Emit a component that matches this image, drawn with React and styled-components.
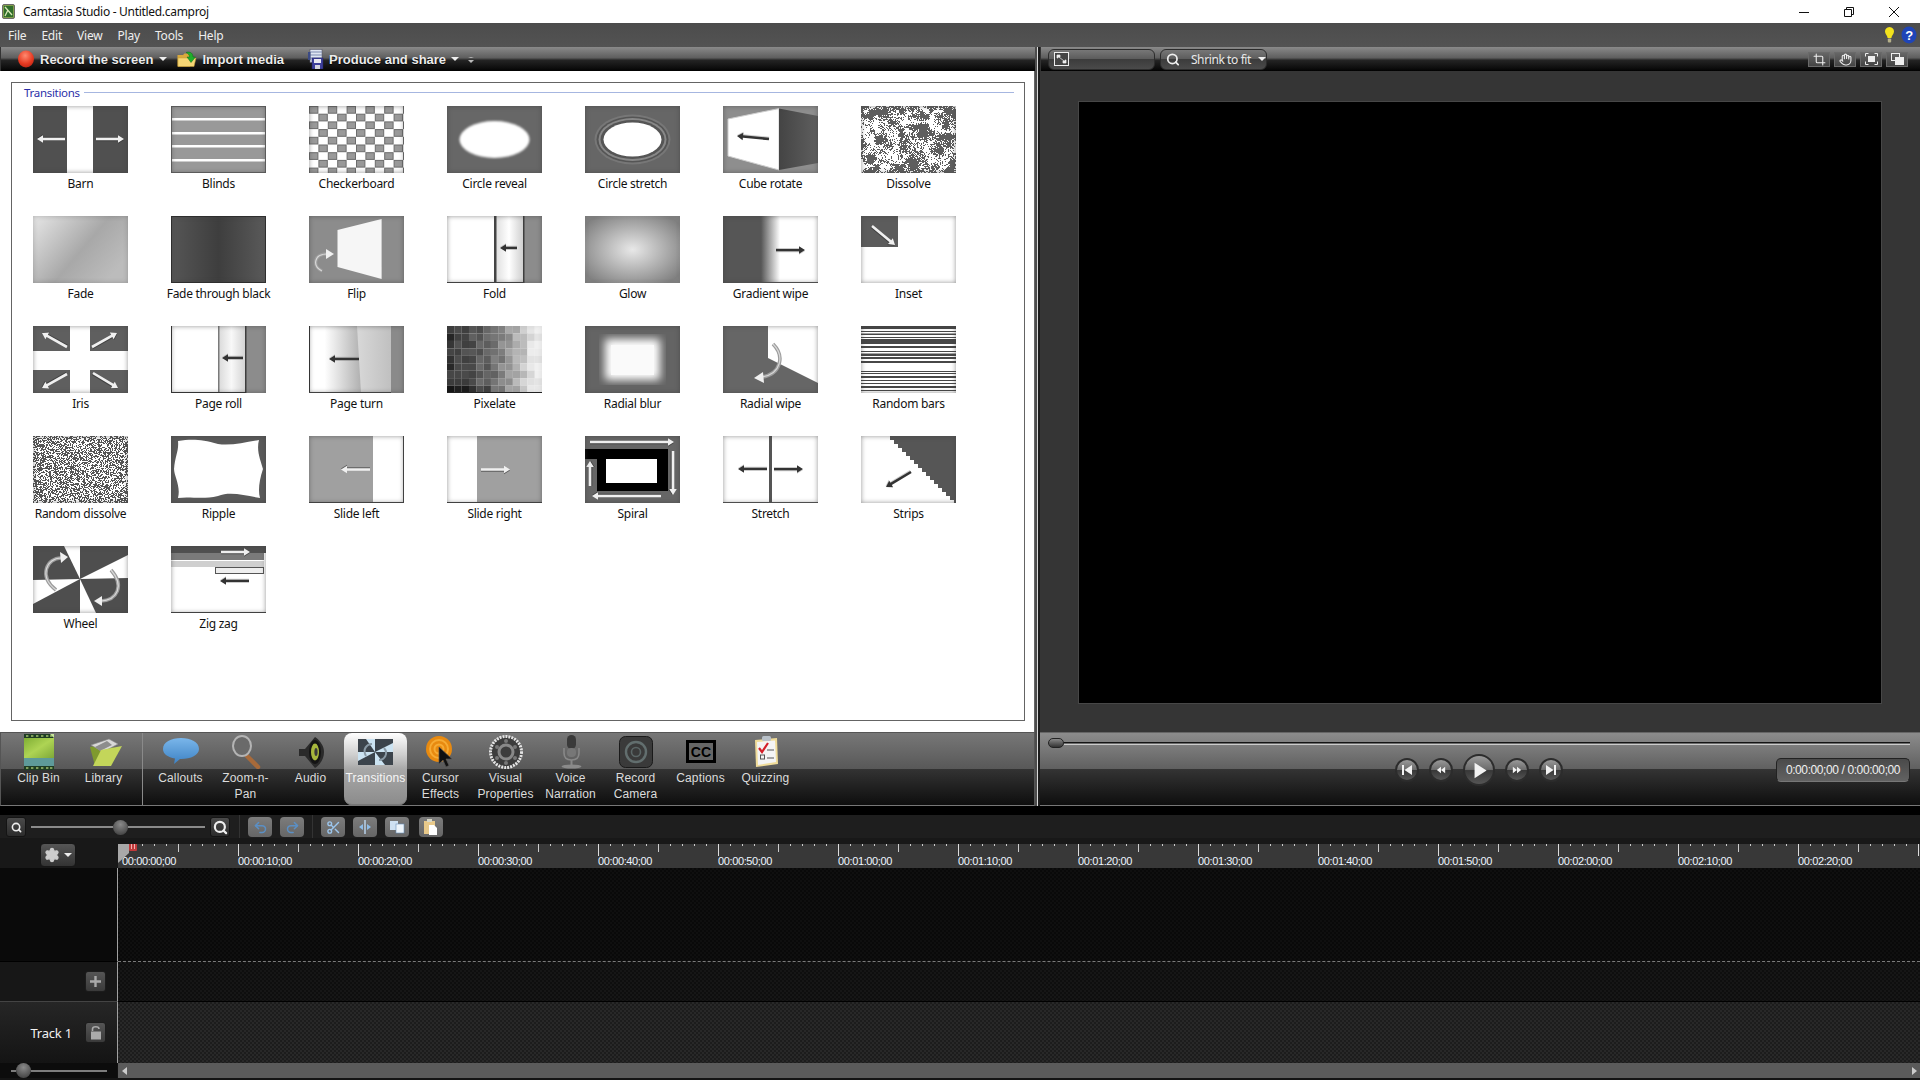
import styled, { createGlobalStyle, css } from "styled-components";
import { Crop, Hand, Redo2, Scissors, Search, Settings, Undo2 } from "lucide-react";

const GlobalStyle = createGlobalStyle`
  html, body { margin: 0; padding: 0; background: #000; }
  * { box-sizing: border-box; }
`;

const panelGradient = css`
  background: linear-gradient(#777 0%, #585858 50%, #333 50%, #0e0e0e 100%);
`;

const App_ = styled.div`
  width: 1920px;
  height: 1080px;
  overflow: hidden;
  display: flex;
  flex-direction: column;
  font-family: "Noto Sans", sans-serif;
  background: #000;
`;

const TitleBar = styled.div`
  height: 23px;
  background: #fff;
  display: flex;
  align-items: center;
  padding-left: 2px;
  font-size: 12px;
  color: #111;
`;
const TitleText = styled.span`
  margin-left: 8px;
  letter-spacing: -0.3px;
`;
const WindowButtons = styled.div`
  margin-left: auto;
  display: flex;
  gap: 35px;
  padding-right: 21px;
  align-items: center;
`;

const MenuBar = styled.div`
  height: 24px;
  background: linear-gradient(#4c4c4c, #535353);
  display: flex;
  align-items: center;
  padding-left: 8px;
  gap: 15px;
  font-size: 12px;
  letter-spacing: -0.2px;
  color: #eee;
`;
const HelpIcons = styled.div`
  margin-left: auto;
  display: flex;
  gap: 6px;
  padding-right: 3px;
  align-items: center;
`;

const Workspace = styled.div`
  height: 759px;
  display: flex;
`;
const LeftPane = styled.div`
  width: 1035px;
  display: flex;
  flex-direction: column;
`;
const Divider = styled.div`
  width: 5px;
  background: linear-gradient(90deg, #4c4c4c 0 2px, #d8d8d8 2px 3px, #1c1c1c 3px);
`;
const RightPane = styled.div`
  flex: 1;
  display: flex;
  flex-direction: column;
  background: #353535;
`;

const Toolbar = styled.div`
  height: 24px;
  flex-shrink: 0;
  display: flex;
  align-items: center;
  background: linear-gradient(#8a8a8a 0%, #5e5e5e 45%, #242424 55%, #0a0a0a 92%, #000 100%);
  border-left: 1px solid #333;
`;
const ToolItem = styled.div`
  display: flex;
  align-items: center;
  gap: ${(p) => p.$gap ?? 6}px;
  margin-left: ${(p) => p.$ml}px;
  font-family: "Liberation Sans", sans-serif;
  font-weight: 700;
  font-size: 13px;
  color: #ececec;
  text-shadow: 0 1px 1px #000;
`;
const Caret = styled.span`
  width: 0;
  height: 0;
  flex-shrink: 0;
  border-left: 4px solid transparent;
  border-right: 4px solid transparent;
  border-top: 4px solid #eee;
`;
const MoreMark = styled.span`
  margin-left: 9px;
  width: 6px;
  height: 5px;
  border-top: 1px solid #bbb;
  border-left: 3px solid transparent;
  border-right: 3px solid transparent;
  position: relative;
  &::after {
    content: "";
    position: absolute;
    top: 2px;
    left: -3px;
    border-left: 3px solid transparent;
    border-right: 3px solid transparent;
    border-top: 3px solid #bbb;
  }
`;

const BinArea = styled.div`
  flex: 1;
  background: #fff;
  padding: 11px 9px 11px 11px;
  border-right: 1px solid #666;
`;
const GroupBox = styled.div`
  height: 100%;
  border: 1px solid #646464;
  padding: 0 10px 0 21px;
`;
const GroupHeader = styled.div`
  height: 23px;
  display: flex;
  align-items: center;
  gap: 4px;
  margin-left: -9px;
  font-size: 11.5px;
  letter-spacing: -0.3px;
  color: #2b2fa8;
  padding-bottom: 5px;
  &::after {
    content: "";
    flex: 1;
    height: 1px;
    background: #a6b6e0;
  }
`;
const TransitionGrid = styled.div`
  display: grid;
  grid-template-columns: repeat(7, 95px);
  grid-auto-rows: 110px;
  column-gap: 43px;
`;
const TransitionCell = styled.div`
  display: flex;
  flex-direction: column;
  align-items: center;
`;
const Thumb = styled.div`
  width: 95px;
  height: 67px;
  position: relative;
  overflow: hidden;
  svg { display: block; }
  &::after {
    content: "";
    position: absolute;
    inset: 0;
    box-shadow: inset 0 0 5px rgba(60, 60, 60, ${(p) => p.$soft ?? 0.55});
  }
`;
const ThumbLabel = styled.div`
  margin-top: 2px;
  height: 18px;
  line-height: 18px;
  font-size: 12px;
  letter-spacing: -0.28px;
  color: #111;
  white-space: nowrap;
`;

const TabBar = styled.div`
  height: 74px;
  flex-shrink: 0;
  display: flex;
  ${panelGradient}
  border: 1px solid #555;
  border-bottom-color: #777;
  font-family: "Liberation Sans", sans-serif;
`;
const TabGroup = styled.div`
  display: flex;
  padding-left: 5px;
  width: ${(p) => p.$w};
  border-right: ${(p) => (p.$sep ? "1px solid #8a8a8a" : "0")};
`;
const Tab = styled.div`
  width: ${(p) => (p.$active ? 63 : 65)}px;
  margin: 0 ${(p) => (p.$active ? 1 : 0)}px;
  height: 72px;
  display: flex;
  flex-direction: column;
  align-items: center;
  font-size: 12px;
  line-height: 16px;
  letter-spacing: 0.15px;
  text-align: center;
  white-space: nowrap;
  color: ${(p) => (p.$active ? "#f6f6f6" : "#dcdcdc")};
  border-radius: 8px;
  ${(p) =>
    p.$active &&
    css`
      background: linear-gradient(#fff 0%, #cfcfcf 30%, #a8a8a8 50%, #8b8b8b 100%);
      box-shadow: inset 0 -1px 0 #777;
    `}
`;
const TabIcon = styled.div`
  height: 37px;
  flex-shrink: 0;
  display: flex;
  align-items: center;
  justify-content: center;
`;
const TabLabel = styled.div`
  white-space: pre-line;
`;

const PreviewBar = styled(Toolbar)`
  padding: 0 12px 0 7px;
  gap: 5px;
`;
const PreviewField = styled.div`
  width: 107px;
  height: 21px;
  flex-shrink: 0;
  display: flex;
  align-items: center;
  gap: 11px;
  padding-left: 5px;
  border-radius: 6px;
  background: linear-gradient(#777, #5a5a5a 50%, #3c3c3c 50%, #4a4a4a);
  border: 1px solid #2c2c2c;
  font-size: 12px;
  letter-spacing: -0.4px;
  white-space: nowrap;
  color: #e8e8e8;
`;
const FieldCaret = styled(Caret)`
  margin-left: -4px;
`;
const PreviewTools = styled.div`
  margin-left: auto;
  display: flex;
  gap: 4px;
`;
const PreviewTool = styled.div`
  width: 22px;
  height: 15px;
  display: flex;
  align-items: center;
  justify-content: center;
  background: linear-gradient(#666, #444);
  border: 1px solid #6a6a6a;
`;
const PreviewStage = styled.div`
  flex: 1;
  padding: 30px 38px 28px 38px;
`;
const Canvas = styled.div`
  height: 100%;
  background: #000;
  border: 1px solid #474747;
`;
const Controls = styled.div`
  height: 74px;
  flex-shrink: 0;
  background: linear-gradient(#8c8c8c 0%, #606060 50%, #343434 50%, #0e0e0e 100%);
  border-top: 1px solid #666;
  border-bottom: 1px solid #777;
  padding: 5px 10px 0 8px;
  display: flex;
  flex-direction: column;
`;
const Scrubber = styled.div`
  height: 10px;
  display: flex;
  align-items: center;
  &::after {
    content: "";
    flex: 1;
    height: 3px;
    background: linear-gradient(#141414 0 1px, #6a6a6a 1px 2px, #ccc 2px);
  }
`;
const ScrubKnob = styled.div`
  width: 16px;
  height: 10px;
  border-radius: 5px;
  background: linear-gradient(#888, #333);
  border: 1px solid #222;
`;
const ControlRow = styled.div`
  margin-top: 6px;
  height: 32px;
  display: flex;
  align-items: center;
  padding-left: 347px;
  gap: 10px;
`;
const RoundButton = styled.div`
  width: ${(p) => (p.$big ? 32 : 24)}px;
  height: ${(p) => (p.$big ? 32 : 24)}px;
  border-radius: 50%;
  display: flex;
  align-items: center;
  justify-content: center;
  background: linear-gradient(#9a9a9a, #6c6c6c 48%, #383838 52%, #555);
  border: 2px solid #2c2c2c;
`;
const TimeBox = styled.div`
  margin-left: auto;
  width: 134px;
  height: 24px;
  border-radius: 5px;
  background: linear-gradient(#4a4a4a, #626262);
  border: 1px solid #222;
  border-bottom-color: #777;
  display: flex;
  align-items: center;
  justify-content: center;
  font-family: "Liberation Sans", sans-serif;
  font-size: 12px;
  letter-spacing: -0.4px;
  color: #f0f0f0;
`;

const BlackStrip = styled.div`
  height: 9px;
  flex-shrink: 0;
  background: #000;
`;

const Timeline = styled.div`
  flex: 1;
  display: flex;
  flex-direction: column;
  background: #000;
`;
const TimelineBar = styled.div`
  height: 29px;
  flex-shrink: 0;
  background: linear-gradient(#1e1e1e 0 23px, #181818 23px);
  display: flex;
  align-items: flex-start;
  padding: 2px 0 0 6px;
`;
const DarkButton = styled.div`
  width: 20px;
  height: 20px;
  border-radius: 3px;
  background: linear-gradient(#4a4a4a, #2c2c2c);
  display: flex;
  align-items: center;
  justify-content: center;
  border: 1px solid #141414;
`;
const ZoomTrack = styled.div`
  width: 174px;
  height: 14px;
  margin: 3px 5px 0;
  display: flex;
  align-items: center;
  &::before, &::after {
    content: "";
    height: 2px;
    background: #8a8a8a;
  }
  &::before { width: 82px; }
  &::after { flex: 1; }
`;
const Knob = styled.div`
  width: 15px;
  height: 15px;
  flex-shrink: 0;
  border-radius: 50%;
  background: radial-gradient(circle at 50% 30%, #8a8a8a, #4a4a4a 75%);
`;
const BarSep = styled.div`
  width: 1px;
  height: 23px;
  margin: -2px ${(p) => p.$r}px 0 ${(p) => p.$l}px;
  background: #333;
`;
const GreyButton = styled.div`
  width: 24px;
  height: 20px;
  margin-right: ${(p) => p.$mr ?? 8}px;
  border-radius: 4px;
  background: linear-gradient(#7c7c7c, #666);
  display: flex;
  align-items: center;
  justify-content: center;
`;

const TimelineGrid = styled.div`
  flex: 1;
  display: grid;
  grid-template-columns: 118px 1fr;
  grid-template-rows: 24px 93px 40px 62px 15px 2px;
`;
const GearCell = styled.div`
  background: #181818;
  padding: 0 0 0 40px;
  margin-top: -1px;
`;
const GearButton = styled.div`
  width: 36px;
  height: 24px;
  border-radius: 4px;
  background: linear-gradient(#555, #333);
  display: flex;
  align-items: center;
  justify-content: center;
  gap: 4px;
  border: 1px solid #161616;
`;
const Ruler = styled.div`
  position: relative;
  display: flex;
  align-items: flex-end;
  overflow: hidden;
  background:
    repeating-linear-gradient(90deg, #ddd 0 1px, transparent 1px 120px) 0 0 / 100% 12px no-repeat,
    repeating-linear-gradient(90deg, #ccc 0 1px, transparent 1px 60px) 0 0 / 100% 8px no-repeat,
    repeating-linear-gradient(90deg, #ccc 0 1px, transparent 1px 12px) 0 0 / 100% 2px no-repeat,
    #383838;
  font-family: "Liberation Sans", sans-serif;
  font-size: 11px;
  line-height: 13px;
  letter-spacing: -0.38px;
  color: #eef6ff;
`;
const RulerLabel = styled.div`
  width: 120px;
  flex-shrink: 0;
  &:first-of-type { padding-left: 4px; }
`;
const PlayMark = styled.svg`
  position: absolute;
  left: 0;
  top: -3px;
`;
const HeadCell = styled.div`
  background: ${(p) => p.$bg};
  border-top: ${(p) => p.$line ?? "0"};
  border-right: 1px solid #a0a0a0;
  display: flex;
  align-items: center;
  justify-content: flex-end;
  padding-right: 11px;
  gap: 13px;
`;
const TrackName = styled.span`
  font-size: 13px;
  letter-spacing: -0.2px;
  color: #f2f2f2;
`;
const TrackButton = styled.div`
  width: 21px;
  height: 21px;
  border-radius: 3px;
  background: linear-gradient(#555, #3a3a3a);
  border: 1px solid #1c1c1c;
  display: flex;
  align-items: center;
  justify-content: center;
`;
const Lane = styled.div`
  background-color: ${(p) => p.$bg};
  background-image: repeating-conic-gradient(rgba(255, 255, 255, ${(p) => p.$dot}) 0 25%, transparent 0 50%);
  background-size: 4px 4px;
  border-top: ${(p) => p.$line ?? "0"};
`;
const ZoomCell = styled.div`
  background: #0c0c0c;
  display: flex;
  align-items: center;
  padding-left: 11px;
  border-right: 1px solid #111;
  &::after {
    content: "";
    width: 76px;
    height: 2px;
    background: #7c7c7c;
  }
`;
const SmallStub = styled.div`
  width: 5px;
  height: 2px;
  background: #7c7c7c;
`;
const ScrollBar = styled.div`
  background: #5b5b5b;
  display: flex;
  align-items: center;
  justify-content: space-between;
  padding: 0 3px 0 4px;
`;
const ScrollArrow = styled.span`
  width: 0;
  height: 0;
  border-top: 4px solid transparent;
  border-bottom: 4px solid transparent;
  ${(p) => (p.$left ? "border-right: 5px solid #ccc;" : "border-left: 5px solid #ccc;")}
`;
const Footer = styled.div`
  grid-column: 1 / 3;
  background: #141414;
`;

// seeded noise so the dissolve thumbnails stay the same between runs
const seeded = (s) => () => {
  s = (s + 0x6d2b79f5) | 0;
  let t = Math.imul(s ^ (s >>> 15), 1 | s);
  t = (t + Math.imul(t ^ (t >>> 7), 61 | t)) ^ t;
  return ((t ^ (t >>> 14)) >>> 0) / 4294967296;
};

const noisePath = (cell, seed, test) => {
  const rnd = seeded(seed);
  let d = "";
  for (let y = 0; y < 67; y += cell) {
    for (let x = 0; x < 95; x += cell) {
      if (test(rnd(), x, y)) d += `M${x} ${y}h${cell}v${cell}h-${cell}z`;
    }
  }
  return d;
};

const blobs = (() => {
  const rnd = seeded(7);
  return Array.from({ length: 400 }, () => rnd());
})();
// smooth value noise, so the white patches have no square edges
const blobAt = (x, y) => {
  const gx = x / 5;
  const gy = y / 5;
  const ix = Math.floor(gx);
  const iy = Math.floor(gy);
  const fx = gx - ix;
  const fy = gy - iy;
  const at = (a, b) => blobs[a + b * 20];
  const top = at(ix, iy) * (1 - fx) + at(ix + 1, iy) * fx;
  const bottom = at(ix, iy + 1) * (1 - fx) + at(ix + 1, iy + 1) * fx;
  return top * (1 - fy) + bottom * fy;
};

const dissolvePath = noisePath(1, 11, (r, x, y) => r * 0.4 + blobAt(x, y) * 0.6 > 0.54);
const randomPath = noisePath(1, 23, (r) => r > 0.52);

const pixelCells = (() => {
  const rnd = seeded(5);
  const cells = [];
  for (let y = 0; y < 9; y++) {
    for (let x = 0; x < 13; x++) {
      const base = x < 6 ? 55 + x * 9 : 110 + (x - 6) * 22;
      const v = Math.min(240, Math.max(22, base + (rnd() - 0.5) * 36 - (y === 8 && x < 6 ? 30 : 0)));
      cells.push({ x, y, v: Math.round(v) });
    }
  }
  return cells;
})();

const stairs = (() => {
  let pts = "29,0 95,0 95,67 ";
  for (let i = 16; i >= 0; i--) {
    const x = 29 + i * 4;
    const y = i * 4;
    pts += `${x + 4},${y + 4} ${x},${y + 4} `;
  }
  return pts;
})();

const Arrow = ({ x1, y1, x2, y2, dark }) => {
  const len = Math.hypot(x2 - x1, y2 - y1);
  const deg = (Math.atan2(y2 - y1, x2 - x1) * 180) / Math.PI;
  const d = `M0 -1.3H${len - 6}V-3.8L${len} 0L${len - 6} 3.8V1.3H0Z`;
  return (
    <g transform={`translate(${x1} ${y1}) rotate(${deg})`}>
      <path d={d} transform="translate(0 1)" fill={dark ? "#aaa" : "#2e2e2e"} opacity="0.6" />
      <path d={d} fill={dark ? "#333" : "#f0f0f0"} />
    </g>
  );
};

const CurveArrow = ({ d, head }) => (
  <g>
    <path d={d} fill="none" stroke="#9c9c9c" strokeWidth="3.6" />
    <path d={d} fill="none" stroke="#d8d8d8" strokeWidth="1.2" />
    <polygon points={head} fill="#f0f0f0" />
  </g>
);

const Art = ({ children, bg = "#fff" }) => (
  <svg width="95" height="67" viewBox="0 0 95 67">
    <rect width="95" height="67" fill={bg} />
    {children}
  </svg>
);

const checkerCells = [];
for (let r = 0; r < 9; r++) {
  for (let c = 0; c < 11; c++) {
    if ((r + c) % 2 === 0) checkerCells.push([c, r]);
  }
}

const bars = [[3, 2], [6, 1.5], [9, 2], [12, 1], [18, 2], [22, 3], [26, 1.5], [30, 1], [33, 2], [37, 8], [46, 1], [48, 2], [52, 2], [55, 2], [58, 2], [62, 2], [65, 2]];

const transitions = [
  {
    name: "Barn",
    art: (
      <Art bg="#505050">
        <rect x="34" width="26" height="67" fill="#fff" />
        <Arrow x1={32} y1={33} x2={4} y2={33} />
        <Arrow x1={63} y1={33} x2={91} y2={33} />
      </Art>
    ),
  },
  {
    name: "Blinds",
    art: (
      <Art bg="#999">
        {[12, 26, 39, 53].map((y) => (
          <rect key={y} y={y} width="95" height="2.5" fill="#fff" />
        ))}
        <rect x="0.5" y="0.5" width="94" height="66" fill="none" stroke="#666" />
      </Art>
    ),
  },
  {
    name: "Checkerboard",
    art: (
      <Art>
        {checkerCells.map(([c, r]) => (
          <rect key={`${c}-${r}`} x={c * 9.4 + 0.5} y={r * 7.7 + 0.5} width="8.4" height="6.7" fill="#999" stroke="#6c6c6c" />
        ))}
      </Art>
    ),
  },
  {
    name: "Circle reveal",
    art: (
      <Art bg="#676767">
        <defs>
          <filter id="soft1"><feGaussianBlur stdDeviation="1" /></filter>
        </defs>
        <ellipse cx="47.5" cy="33.5" rx="35" ry="18.5" fill="#fff" filter="url(#soft1)" />
      </Art>
    ),
  },
  {
    name: "Circle stretch",
    art: (
      <Art bg="#666">
        <ellipse cx="47.5" cy="33.5" rx="38" ry="25" fill="#777" />
        <ellipse cx="47.5" cy="33.5" rx="36" ry="23" fill="#555" />
        <ellipse cx="47.5" cy="33.5" rx="34" ry="21.5" fill="#888" />
        <ellipse cx="47.5" cy="33.5" rx="32" ry="19.5" fill="#555" />
        <ellipse cx="47.5" cy="33.5" rx="29" ry="17" fill="#fff" />
      </Art>
    ),
  },
  {
    name: "Cube rotate",
    art: (
      <Art bg="#8e8e8e">
        <defs>
          <linearGradient id="cubeFace" x1="0" x2="1">
            <stop offset="0" stopColor="#444" />
            <stop offset="1" stopColor="#5f5f5f" />
          </linearGradient>
        </defs>
        <polygon points="5,13 56,2.5 56,64 5,50" fill="#fff" stroke="#cfcfcf" />
        <polygon points="56,2.5 95,10 95,57 56,64" fill="url(#cubeFace)" />
        <Arrow x1={46} y1={33} x2={14} y2={30} dark />
      </Art>
    ),
  },
  {
    name: "Dissolve",
    art: (
      <Art bg="#5e5e5e">
        <path d={dissolvePath} fill="#fff" />
      </Art>
    ),
  },
  {
    name: "Fade",
    art: (
      <Art>
        <defs>
          <linearGradient id="fadeFill" x1="0" y1="0" x2="1" y2="0.6">
            <stop offset="0" stopColor="#e6e6e6" />
            <stop offset="0.6" stopColor="#a8a8a8" />
            <stop offset="1" stopColor="#bcbcbc" />
          </linearGradient>
        </defs>
        <rect width="95" height="67" fill="url(#fadeFill)" />
      </Art>
    ),
  },
  {
    name: "Fade through black",
    art: (
      <Art>
        <defs>
          <linearGradient id="fadeBlack" x1="0" x2="1">
            <stop offset="0" stopColor="#565656" />
            <stop offset="0.5" stopColor="#3e3e3e" />
            <stop offset="1" stopColor="#5a5a5a" />
          </linearGradient>
        </defs>
        <rect width="95" height="67" fill="url(#fadeBlack)" />
        <rect x="0.5" y="0.5" width="94" height="66" fill="none" stroke="#2b2b2b" />
      </Art>
    ),
  },
  {
    name: "Flip",
    art: (
      <Art bg="#8c8c8c">
        <polygon points="28.5,14 72.6,3 72.6,63 28.5,51" fill="#f6f6f6" />
        <CurveArrow d="M13 55C3 50 5 38 18 38" head="17,33 25,38 17,43" />
      </Art>
    ),
  },
  {
    name: "Fold",
    art: (
      <Art>
        <defs>
          <linearGradient id="foldFill" x1="0" x2="1">
            <stop offset="0" stopColor="#ddd" />
            <stop offset="0.5" stopColor="#fff" />
            <stop offset="1" stopColor="#d0d0d0" />
          </linearGradient>
        </defs>
        <rect x="48" width="28" height="67" fill="url(#foldFill)" />
        <rect x="47" width="2.5" height="67" fill="#444" />
        <rect x="76" width="19" height="67" fill="#8c8c8c" />
        <rect x="76" width="1.5" height="67" fill="#3e3e3e" />
        <rect y="66" width="77" height="1" fill="#444" />
        <Arrow x1={70} y1={32} x2={53} y2={32} dark />
      </Art>
    ),
  },
  {
    name: "Glow",
    art: (
      <Art>
        <defs>
          <radialGradient id="glowFill" r="0.62">
            <stop offset="0" stopColor="#e8e8e8" />
            <stop offset="1" stopColor="#808080" />
          </radialGradient>
        </defs>
        <rect width="95" height="67" fill="url(#glowFill)" />
      </Art>
    ),
  },
  {
    name: "Gradient wipe",
    art: (
      <Art>
        <defs>
          <linearGradient id="wipeFill" x1="0" x2="1">
            <stop offset="0.4" stopColor="#565656" />
            <stop offset="0.6" stopColor="#fff" />
          </linearGradient>
        </defs>
        <rect width="95" height="67" fill="url(#wipeFill)" />
        <Arrow x1={53} y1={34} x2={82} y2={34} dark />
        <rect y="66" width="95" height="1" fill="#555" />
      </Art>
    ),
  },
  {
    name: "Inset",
    art: (
      <Art>
        <rect width="37" height="31" fill="#5c5c5c" />
        <Arrow x1={11} y1={10} x2={34} y2={29} />
      </Art>
    ),
  },
  {
    name: "Iris",
    art: (
      <Art bg="#5f5f5f">
        <rect x="37" width="20" height="67" fill="#fff" />
        <rect y="25" width="95" height="19" fill="#fff" />
        <Arrow x1={34} y1={21} x2={9} y2={7} />
        <Arrow x1={59} y1={21} x2={84} y2={7} />
        <Arrow x1={34} y1={48} x2={9} y2={62} />
        <Arrow x1={60} y1={47} x2={85} y2={62} />
      </Art>
    ),
  },
  {
    name: "Page roll",
    art: (
      <Art>
        <defs>
          <linearGradient id="rollFill" x1="0" x2="1">
            <stop offset="0" stopColor="#d8d8d8" />
            <stop offset="0.5" stopColor="#f8f8f8" />
            <stop offset="1" stopColor="#d4d4d4" />
          </linearGradient>
        </defs>
        <rect x="47" width="27" height="67" fill="url(#rollFill)" />
        <rect x="47" width="1.5" height="67" fill="#7a7a7a" />
        <rect x="74" width="21" height="67" fill="#8c8c8c" />
        <rect x="74" width="1.5" height="67" fill="#3e3e3e" />
        <rect width="1" height="67" fill="#333" />
        <rect y="66" width="75" height="1" fill="#333" />
        <Arrow x1={72} y1={32} x2={51} y2={32} dark />
      </Art>
    ),
  },
  {
    name: "Page turn",
    art: (
      <Art>
        <defs>
          <linearGradient id="turnShade" x1="0" x2="1">
            <stop offset="0.3" stopColor="#fff" />
            <stop offset="1" stopColor="#b0b0b0" />
          </linearGradient>
          <linearGradient id="turnPage" x1="0" x2="1">
            <stop offset="0" stopColor="#d8d8d8" />
            <stop offset="1" stopColor="#c0c0c0" />
          </linearGradient>
        </defs>
        <rect width="52" height="67" fill="url(#turnShade)" />
        <polygon points="48,0 82,0 82,67 52,67" fill="url(#turnPage)" />
        <rect x="82" width="13" height="67" fill="#8a8a8a" />
        <rect width="1" height="67" fill="#333" />
        <rect y="66" width="82" height="1" fill="#444" />
        <Arrow x1={50} y1={33} x2={20} y2={33} dark />
      </Art>
    ),
  },
  {
    name: "Pixelate",
    art: (
      <Art>
        {pixelCells.map(({ x, y, v }) => (
          <rect key={`${x}-${y}`} x={x * 7.31} y={y * 7.45} width="7.4" height="7.5" fill={`rgb(${v},${v},${v})`} />
        ))}
        <rect y="66" width="95" height="1" fill="#222" />
      </Art>
    ),
  },
  {
    name: "Radial blur",
    art: (
      <Art bg="#646464">
        <defs>
          <filter id="soft2"><feGaussianBlur stdDeviation="4" /></filter>
        </defs>
        <rect x="20" y="13" width="55" height="41" fill="#fff" filter="url(#soft2)" />
        <rect x="26" y="19" width="43" height="30" fill="#fafafa" />
      </Art>
    ),
  },
  {
    name: "Radial wipe",
    art: (
      <Art bg="#666">
        <polygon points="45,0 95,0 95,57 45,32" fill="#fff" />
        <CurveArrow d="M50 18C62 30 58 48 39 51" head="40,46 31,52 41,57" />
      </Art>
    ),
  },
  {
    name: "Random bars",
    art: (
      <Art bg="#474747">
        {bars.map(([y, h]) => (
          <rect key={y} y={y} width="95" height={h} fill="#fff" />
        ))}
      </Art>
    ),
  },
  {
    name: "Random dissolve",
    art: (
      <Art bg="#555">
        <path d={randomPath} fill="#fff" />
      </Art>
    ),
  },
  {
    name: "Ripple",
    art: (
      <Art bg="#5a5a5a">
        <path d="M7 5C20 3 30 3 47 8C60 10 75 6 88 4C85 15 90 25 92 33C88 45 87 55 89 62C75 60 60 55 47 60C30 64 20 60 7 62C10 50 3 40 3 33C4 20 8 15 7 5Z" fill="#fff" />
      </Art>
    ),
  },
  {
    name: "Slide left",
    art: (
      <Art bg="#a0a0a0">
        <rect x="64" width="31" height="67" fill="#fff" />
        <rect x="94" width="1" height="67" fill="#444" />
        <rect y="66" width="95" height="1" fill="#444" />
        <Arrow x1={61} y1={33.5} x2={32} y2={33.5} />
      </Art>
    ),
  },
  {
    name: "Slide right",
    art: (
      <Art bg="#a0a0a0">
        <rect width="30" height="67" fill="#fff" />
        <rect y="66" width="95" height="1" fill="#444" />
        <Arrow x1={34} y1={33.5} x2={63} y2={33.5} />
      </Art>
    ),
  },
  {
    name: "Spiral",
    art: (
      <Art bg="#666">
        <rect y="13" width="83" height="42" fill="#000" />
        <rect y="23" width="12" height="32" fill="#666" />
        <rect x="21" y="23" width="51" height="24" fill="#fff" />
        <Arrow x1={5} y1={6} x2={89} y2={6} />
        <Arrow x1={88} y1={15} x2={88} y2={59} />
        <Arrow x1={76} y1={60} x2={7} y2={60} />
        <Arrow x1={5} y1={50} x2={5} y2={25} />
      </Art>
    ),
  },
  {
    name: "Stretch",
    art: (
      <Art>
        <rect x="46" width="3" height="67" fill="#555" />
        <rect y="66" width="95" height="1" fill="#555" />
        <Arrow x1={44} y1={33} x2={15} y2={33} dark />
        <Arrow x1={51} y1={33} x2={80} y2={33} dark />
      </Art>
    ),
  },
  {
    name: "Strips",
    art: (
      <Art>
        <polygon points={stairs} fill="#565656" />
        <Arrow x1={50} y1={36} x2={25} y2={51} dark />
      </Art>
    ),
  },
  {
    name: "Wheel",
    art: (
      <Art bg="#4e4e4e">
        <polygon points="47,33 31,0 47,0" fill="#fff" />
        <polygon points="47,33 95,9 95,32" fill="#fff" />
        <polygon points="47,33 47,67 63,67" fill="#fff" />
        <polygon points="47,33 0,34 0,58" fill="#fff" />
        <CurveArrow d="M23 44C5 30 14 12 28 12" head="27,6 35,11 28,17" />
        <CurveArrow d="M78 24C92 40 84 54 68 55" head="69,50 61,55 69,60" />
      </Art>
    ),
  },
  {
    name: "Zig zag",
    art: (
      <Art>
        <rect width="95" height="7" fill="#505050" />
        <rect y="7" width="93" height="7" fill="#7a7a7a" />
        <rect y="15" width="93" height="6" fill="#cfcfcf" />
        <rect x="44.5" y="21.5" width="48" height="6" fill="#eee" stroke="#555" />
        <rect y="66" width="95" height="1" fill="#444" />
        <Arrow x1={50} y1={6} x2={79} y2={6} />
        <Arrow x1={78} y1={35} x2={49} y2={35} dark />
      </Art>
    ),
  },
];

const softThumbs = { Fade: 0.3, Glow: 0.1, Pixelate: 0.1 };

const AppLogo = () => (
  <svg width="13" height="15" viewBox="0 0 13 15">
    <rect x="0.5" y="0.5" width="12" height="14" rx="1.5" fill="#7f9d4a" stroke="#6b6b6b" />
    <rect x="2" y="2" width="9" height="11" fill="#2f6d2a" />
    <path d="M3 3L10 11M3 12L6 6" stroke="#d9e8b8" strokeWidth="1.3" fill="none" />
  </svg>
);

const MinIcon = () => (
  <svg width="10" height="10" viewBox="0 0 10 10"><path d="M0 5.5H10" stroke="#111" /></svg>
);
const RestoreIcon = () => (
  <svg width="10" height="10" viewBox="0 0 10 10">
    <path d="M0.5 2.5H7.5V9.5H0.5ZM2.5 2.5V0.5H9.5V7.5H7.5" fill="none" stroke="#111" />
  </svg>
);
const CloseIcon = () => (
  <svg width="10" height="10" viewBox="0 0 10 10"><path d="M0 0L10 10M10 0L0 10" stroke="#111" /></svg>
);

const BulbIcon = () => (
  <svg width="11" height="18" viewBox="0 0 11 18">
    <path d="M5.5 1C2.5 1 1 3.2 1 5.6C1 8 3.4 9.5 3.6 12H7.4C7.6 9.5 10 8 10 5.6C10 3.2 8.5 1 5.5 1Z" fill="#f3e21c" />
    <rect x="3.8" y="12.5" width="3.4" height="4" rx="1" fill="#b5b08a" />
  </svg>
);
const HelpIcon = () => (
  <svg width="16" height="18" viewBox="0 0 16 18">
    <ellipse cx="8" cy="9" rx="7.5" ry="8.5" fill="#1f45b8" />
    <text x="8" y="13.5" textAnchor="middle" fontSize="13" fontWeight="700" fontFamily="Liberation Sans" fill="#fff">?</text>
  </svg>
);

const RecordIcon = () => (
  <svg width="16" height="18" viewBox="0 0 16 18">
    <defs>
      <radialGradient id="recRed" cx="0.45" cy="0.3" r="0.8">
        <stop offset="0" stopColor="#ff8a70" />
        <stop offset="0.6" stopColor="#e63a22" />
        <stop offset="1" stopColor="#b5200f" />
      </radialGradient>
    </defs>
    <ellipse cx="8" cy="9" rx="8" ry="8.5" fill="url(#recRed)" />
  </svg>
);
const FolderIcon = () => (
  <svg width="20" height="17" viewBox="0 0 20 17">
    <path d="M0.5 4H6L7.5 2.5H13V15.5H0.5Z" fill="#d9a93c" />
    <path d="M1 7H19L17 15.5H1Z" fill="#f6d675" stroke="#c39a36" strokeWidth="0.5" />
    <path d="M9 1.5C14 0 16 3 16 6H18.5L14 11.5L10 6H12.5C12.5 4 11 2.5 9 1.5Z" fill="#1fae2a" stroke="#0d6b16" strokeWidth="0.5" />
  </svg>
);
const ProduceIcon = () => (
  <svg width="16" height="20" viewBox="0 0 16 20">
    <rect x="2" y="0.5" width="12" height="13" fill="#dfe6f3" stroke="#556" strokeWidth="0.6" />
    <path d="M2 3H14M2 6H14M2 9H14" stroke="#7d8bb0" strokeWidth="1" />
    <rect x="0" y="3" width="2.5" height="8" fill="#3b4a84" />
    <rect x="4" y="9" width="11" height="11" fill="#3d3f9c" stroke="#20215e" strokeWidth="0.5" />
    <rect x="6" y="10" width="7" height="4" fill="#e9e9f2" />
    <rect x="7" y="16" width="5" height="4" fill="#d5d5e0" />
  </svg>
);

const ClipBinIcon = () => (
  <svg width="30" height="36" viewBox="0 0 30 36">
    <defs>
      <linearGradient id="clipFilm" x1="0" y1="0" x2="1" y2="1">
        <stop offset="0" stopColor="#7fae34" />
        <stop offset="0.5" stopColor="#aed454" />
        <stop offset="1" stopColor="#7ea838" />
      </linearGradient>
    </defs>
    <rect width="30" height="36" fill="#1f3d24" />
    <rect y="4" width="30" height="20" fill="url(#clipFilm)" />
    <rect y="24" width="30" height="8" fill="#5e9a9a" />
    {[2, 7, 12, 17, 22, 26].map((x) => (
      <g key={x}>
        <rect x={x} y="1" width="2.4" height="2" fill="#7f9f5a" />
        <rect x={x} y="33" width="2.4" height="2" fill="#7f9f5a" />
      </g>
    ))}
    <path d="M26 0L30 4V0Z" fill="#c8e89a" />
  </svg>
);
const LibraryIcon = () => (
  <svg width="36" height="30" viewBox="0 0 36 30">
    <path d="M4 10L9 29H24L34 12L14 8Z" fill="#7f9a2e" />
    <path d="M5 8L23 2L32 7L17 15Z" fill="#d8d8d8" stroke="#888" strokeWidth="0.6" />
    <path d="M9 10L21 4L26 8L14 14Z" fill="#8d8d8d" />
    <path d="M15 13L36 9L25 29H7Z" fill="#c3d65a" />
  </svg>
);
const CalloutIcon = () => (
  <svg width="36" height="28" viewBox="0 0 36 28">
    <defs>
      <linearGradient id="calloutFill" x1="0" x2="0" y1="0" y2="1">
        <stop offset="0" stopColor="#7ab6ea" />
        <stop offset="1" stopColor="#3d82c4" />
      </linearGradient>
    </defs>
    <path d="M18 0C28 0 36 4 36 11C36 17 28 21 18 21H17L11 26L12 20.5C5 19.5 0 16 0 11C0 4 8 0 18 0Z" fill="url(#calloutFill)" />
  </svg>
);
const MagnifierIcon = () => (
  <svg width="30" height="34" viewBox="0 0 30 34">
    <path d="M16 21L27 32" stroke="#a86a3a" strokeWidth="4.5" strokeLinecap="round" />
    <ellipse cx="11" cy="11" rx="9" ry="10" fill="#6a6a6a" stroke="#b4b4b4" strokeWidth="2" />
  </svg>
);
const AudioIcon = () => (
  <svg width="28" height="34" viewBox="0 0 28 34">
    <path d="M2 14H8L18 2C24 6 27 12 27 17C27 23 24 29 18 33L8 21H2Z" fill="#2a2a2a" />
    <ellipse cx="18" cy="17" rx="6" ry="12" fill="#141414" />
    <ellipse cx="18" cy="17" rx="4" ry="8.5" fill="#a6b63c" />
    <ellipse cx="19" cy="17" rx="1.6" ry="4" fill="#3a3a3a" />
  </svg>
);
const TransitionsIcon = () => (
  <svg width="35" height="26" viewBox="0 0 35 26">
    <rect width="35" height="26" fill="#3c444c" />
    <polygon points="17,13 8,0 17,0" fill="#cbe3f2" />
    <polygon points="17,13 35,4 35,13" fill="#cbe3f2" />
    <polygon points="17,13 17,26 27,26" fill="#cbe3f2" />
    <polygon points="17,13 0,13 0,22" fill="#cbe3f2" />
    <path d="M8 17C4 10 9 5 14 5M26 9C31 15 26 21 21 21" fill="none" stroke="#8a9aa6" strokeWidth="2" />
  </svg>
);
const CursorIcon = () => (
  <svg width="30" height="34" viewBox="0 0 30 34">
    <circle cx="13" cy="14" r="13" fill="#e88a10" />
    <circle cx="13" cy="14" r="9" fill="none" stroke="#f6ab34" strokeWidth="2" />
    <circle cx="13" cy="14" r="4.5" fill="none" stroke="#f6ab34" strokeWidth="2" />
    <path d="M13 12V29L17 25L20 32L23 30.5L20 24H26Z" fill="#111" stroke="#555" strokeWidth="0.7" />
  </svg>
);
const VisualIcon = () => (
  <svg width="34" height="34" viewBox="0 0 34 34">
    <circle cx="17" cy="17" r="15.5" fill="#3c3c3c" stroke="#e4e4e4" strokeWidth="3" strokeDasharray="2 1" />
    <circle cx="17" cy="17" r="7" fill="none" stroke="#888" strokeWidth="3" />
    {[[17, 6], [26, 12], [26, 23], [17, 28], [8, 23], [8, 12]].map(([x, y]) => (
      <circle key={`${x}${y}`} cx={x} cy={y} r="2" fill="#777" />
    ))}
  </svg>
);
const MicIcon = () => (
  <svg width="22" height="34" viewBox="0 0 22 34">
    <rect x="7" y="0" width="9" height="14" rx="4.5" fill="#3a3a3a" />
    <rect x="7" y="13" width="9" height="9" rx="4" fill="#777" />
    <path d="M4 13V18C4 23 7 25 11.500 25C16 25 19 23 19 18V13" fill="none" stroke="#888" strokeWidth="1.6" />
    <rect x="10.500" y="25" width="2" height="6" fill="#888" />
    <ellipse cx="11.500" cy="31.500" rx="10" ry="2" fill="#8a8a8a" />
  </svg>
);
const CameraIcon = () => (
  <svg width="34" height="32" viewBox="0 0 34 32">
    <rect x="0.5" y="0.5" width="33" height="31" rx="6" fill="#3a3a3a" stroke="#1a1a1a" />
    <circle cx="17" cy="16" r="10" fill="none" stroke="#626e6e" strokeWidth="2.4" />
    <circle cx="17" cy="16" r="4.5" fill="none" stroke="#5b6666" strokeWidth="1.6" />
  </svg>
);
const CaptionsIcon = () => (
  <svg width="30" height="23" viewBox="0 0 30 23">
    <rect width="30" height="23" fill="#000" />
    <rect x="3" y="3" width="24" height="17" fill="#666" />
    <text x="15" y="16.500" textAnchor="middle" fontSize="14" fontWeight="700" fontFamily="Liberation Sans" fill="#000">CC</text>
  </svg>
);
const QuizIcon = () => (
  <svg width="26" height="32" viewBox="0 0 26 32">
    <path d="M2 4L24 2L25 28L3 31Z" fill="#f0dc9a" />
    <path d="M4 6L22 4.500L23 26L5 29Z" fill="#f4f4f4" />
    <rect x="9" y="0" width="9" height="5" rx="1.5" fill="#b8c0c8" />
    <path d="M6 12L9 16L15 7" fill="none" stroke="#d4202a" strokeWidth="2.2" />
    <path d="M14 14H21M14 22H21" stroke="#555" strokeWidth="1.2" />
    <rect x="7.500" y="19" width="4" height="4" fill="none" stroke="#555" />
  </svg>
);

const leftTabs = [
  { label: "Clip Bin", icon: <ClipBinIcon /> },
  { label: "Library", icon: <LibraryIcon /> },
];
const mainTabs = [
  { label: "Callouts", icon: <CalloutIcon /> },
  { label: "Zoom-n-\nPan", icon: <MagnifierIcon /> },
  { label: "Audio", icon: <AudioIcon /> },
  { label: "Transitions", icon: <TransitionsIcon />, active: true },
  { label: "Cursor\nEffects", icon: <CursorIcon /> },
  { label: "Visual\nProperties", icon: <VisualIcon /> },
  { label: "Voice\nNarration", icon: <MicIcon /> },
  { label: "Record\nCamera", icon: <CameraIcon /> },
  { label: "Captions", icon: <CaptionsIcon /> },
  { label: "Quizzing", icon: <QuizIcon /> },
];

const rulerTimes = [
  "00:00:00;00", "00:00:10;00", "00:00:20;00", "00:00:30;00", "00:00:40;00", "00:00:50;00", "00:01:00;00", "00:01:10;00",
  "00:01:20;00", "00:01:30;00", "00:01:40;00", "00:01:50;00", "00:02:00;00", "00:02:10;00", "00:02:20;00",
];

const TransportIcon = ({ d, size = 12 }) => (
  <svg width={size} height={size} viewBox="0 0 12 12"><path d={d} fill="#f2f2f2" /></svg>
);

const renderTab = (tab) => (
  <Tab key={tab.label} $active={tab.active}>
    <TabIcon>{tab.icon}</TabIcon>
    <TabLabel>{tab.label}</TabLabel>
  </Tab>
);

export default function App() {
  return (
    <App_>
      <GlobalStyle />
      <TitleBar>
        <AppLogo />
        <TitleText>Camtasia Studio - Untitled.camproj</TitleText>
        <WindowButtons>
          <MinIcon />
          <RestoreIcon />
          <CloseIcon />
        </WindowButtons>
      </TitleBar>
      <MenuBar>
        <span>File</span>
        <span>Edit</span>
        <span>View</span>
        <span>Play</span>
        <span>Tools</span>
        <span>Help</span>
        <HelpIcons>
          <BulbIcon />
          <HelpIcon />
        </HelpIcons>
      </MenuBar>

      <Workspace>
        <LeftPane>
          <Toolbar>
            <ToolItem $ml={17}>
              <RecordIcon />
              <span>Record the screen</span>
              <Caret />
            </ToolItem>
            <ToolItem $ml={10} $gap={5}>
              <FolderIcon />
              <span>Import media</span>
            </ToolItem>
            <ToolItem $ml={24} $gap={5}>
              <ProduceIcon />
              <span>Produce and share</span>
              <Caret />
            </ToolItem>
            <MoreMark />
          </Toolbar>
          <BinArea>
            <GroupBox>
              <GroupHeader>Transitions</GroupHeader>
              <TransitionGrid>
                {transitions.map((t) => (
                  <TransitionCell key={t.name}>
                    <Thumb $soft={softThumbs[t.name]}>{t.art}</Thumb>
                    <ThumbLabel>{t.name}</ThumbLabel>
                  </TransitionCell>
                ))}
              </TransitionGrid>
            </GroupBox>
          </BinArea>
          <TabBar>
            <TabGroup $w="142px" $sep>{leftTabs.map(renderTab)}</TabGroup>
            <TabGroup>{mainTabs.map(renderTab)}</TabGroup>
          </TabBar>
        </LeftPane>
        <Divider />
        <RightPane>
          <PreviewBar>
            <PreviewField>
              <svg width="15" height="14" viewBox="0 0 15 14">
                <rect x="0.5" y="0.5" width="14" height="13" fill="#444" stroke="#eee" />
                <path d="M3 3H6V5H4V6H3ZM12 11H9V9H11V8H12ZM5 5L10 9" fill="#eee" stroke="#eee" strokeWidth="0.7" />
              </svg>
            </PreviewField>
            <PreviewField>
              <Search size={15} color="#eee" strokeWidth={3} />
              <span>Shrink to fit</span>
              <FieldCaret />
            </PreviewField>
            <PreviewTools>
              <PreviewTool><Crop size={13} color="#eee" /></PreviewTool>
              <PreviewTool><Hand size={13} color="#eee" /></PreviewTool>
              <PreviewTool>
                <svg width="13" height="12" viewBox="0 0 13 12">
                  <path d="M0.500 3.500V0.500H3.500M9.500 0.500H12.500V3.500M12.500 8.500V11.500H9.500M3.500 11.500H0.500V8.500" fill="none" stroke="#eee" />
                  <rect x="3" y="3" width="7" height="6" fill="#eee" />
                </svg>
              </PreviewTool>
              <PreviewTool>
                <svg width="13" height="12" viewBox="0 0 13 12">
                  <rect x="0.5" y="0.5" width="8" height="7" fill="none" stroke="#eee" />
                  <rect x="4" y="4" width="9" height="8" fill="#eee" />
                </svg>
              </PreviewTool>
            </PreviewTools>
          </PreviewBar>
          <PreviewStage>
            <Canvas />
          </PreviewStage>
          <Controls>
            <Scrubber>
              <ScrubKnob />
            </Scrubber>
            <ControlRow>
              <RoundButton><TransportIcon d="M1 1H3V11H1ZM11 1V11L3.500 6Z" /></RoundButton>
              <RoundButton><TransportIcon size={10} d="M1 6L6 2V10ZM6 6L11 2V10Z" /></RoundButton>
              <RoundButton $big><TransportIcon size={17} d="M2.500 0.500L11 6L2.500 11.500Z" /></RoundButton>
              <RoundButton><TransportIcon size={10} d="M1 2L6 6L1 10ZM6 2L11 6L6 10Z" /></RoundButton>
              <RoundButton><TransportIcon d="M1 1L8.500 6L1 11ZM9 1H11V11H9Z" /></RoundButton>
              <TimeBox>0:00:00;00 / 0:00:00;00</TimeBox>
            </ControlRow>
          </Controls>
        </RightPane>
      </Workspace>

      <BlackStrip />

      <Timeline>
        <TimelineBar>
          <DarkButton><Search size={11} color="#eee" strokeWidth={3.5} /></DarkButton>
          <ZoomTrack>
            <Knob />
          </ZoomTrack>
          <DarkButton><Search size={15} color="#eee" strokeWidth={3.5} /></DarkButton>
          <BarSep $l={9} $r={8} />
          <GreyButton><Undo2 size={15} color="#5b8fc4" strokeWidth={2.4} /></GreyButton>
          <GreyButton $mr={0}><Redo2 size={15} color="#5b8fc4" strokeWidth={2.4} /></GreyButton>
          <BarSep $l={8} $r={8} />
          <GreyButton><Scissors size={15} color="#9cc6ee" strokeWidth={2.2} /></GreyButton>
          <GreyButton>
            <svg width="14" height="14" viewBox="0 0 14 14">
              <path d="M7 0V14" stroke="#bcd8f2" strokeWidth="1.4" />
              <path d="M5 4V10L1 7ZM9 4V10L13 7Z" fill="#8fbde8" />
            </svg>
          </GreyButton>
          <GreyButton $mr={10}>
            <svg width="16" height="14" viewBox="0 0 16 14">
              <rect x="1" y="1" width="8" height="9" fill="#cfe1f2" />
              <rect x="7" y="4" width="8" height="9" fill="#eef5fb" stroke="#6a8fb8" strokeWidth="0.6" />
            </svg>
          </GreyButton>
          <GreyButton>
            <svg width="16" height="16" viewBox="0 0 16 16">
              <rect x="1" y="2" width="11" height="13" fill="#e8c98a" />
              <rect x="4" y="0" width="5" height="3" fill="#d8d8c8" />
              <path d="M6 6H11L14 9V16H6Z" fill="#fff" />
            </svg>
          </GreyButton>
        </TimelineBar>
        <TimelineGrid>
          <GearCell>
            <GearButton>
              <Settings size={16} color="#ccc" fill="#ccc" />
              <Caret />
            </GearButton>
          </GearCell>
          <Ruler>
            {rulerTimes.map((t) => (
              <RulerLabel key={t}>{t}</RulerLabel>
            ))}
            <PlayMark width="20" height="22" viewBox="0 0 20 22">
              <polygon points="0,3 11,3 11,12 0,22" fill="#a8a8a8" />
              <rect x="11" y="0" width="8" height="10" rx="1" fill="#c0393a" />
              <path d="M13.500 2V8M16.500 2V8" stroke="#f0b0b0" strokeWidth="1" />
            </PlayMark>
          </Ruler>

          <HeadCell $bg="#0a0a0a" />
          <Lane $bg="#090909" $dot={0.022} />

          <HeadCell $bg="#171717" $line="1px solid #000">
            <TrackButton>
              <svg width="13" height="13" viewBox="0 0 13 13"><path d="M6.500 1V12M1 6.500H12" stroke="#aaa" strokeWidth="2.4" /></svg>
            </TrackButton>
          </HeadCell>
          <Lane $bg="#0e0e0e" $dot={0.03} $line="1px dashed #7a7a7a" />

          <HeadCell $bg="linear-gradient(#262626, #141414)" $line="1px solid #444">
            <TrackName>Track 1</TrackName>
            <TrackButton>
              <svg width="12" height="15" viewBox="0 0 12 15">
                <path d="M2.500 6V4C2.500 1 9 1 9 4" fill="none" stroke="#aaa" strokeWidth="1.6" />
                <rect x="1" y="6.500" width="10" height="8" fill="#aaa" />
              </svg>
            </TrackButton>
          </HeadCell>
          <Lane $bg="#1c1c1c" $dot={0.05} $line="1px solid #000" />

          <ZoomCell>
            <SmallStub />
            <Knob />
          </ZoomCell>
          <ScrollBar>
            <ScrollArrow $left />
            <ScrollArrow />
          </ScrollBar>

          <Footer />
        </TimelineGrid>
      </Timeline>
    </App_>
  );
}
